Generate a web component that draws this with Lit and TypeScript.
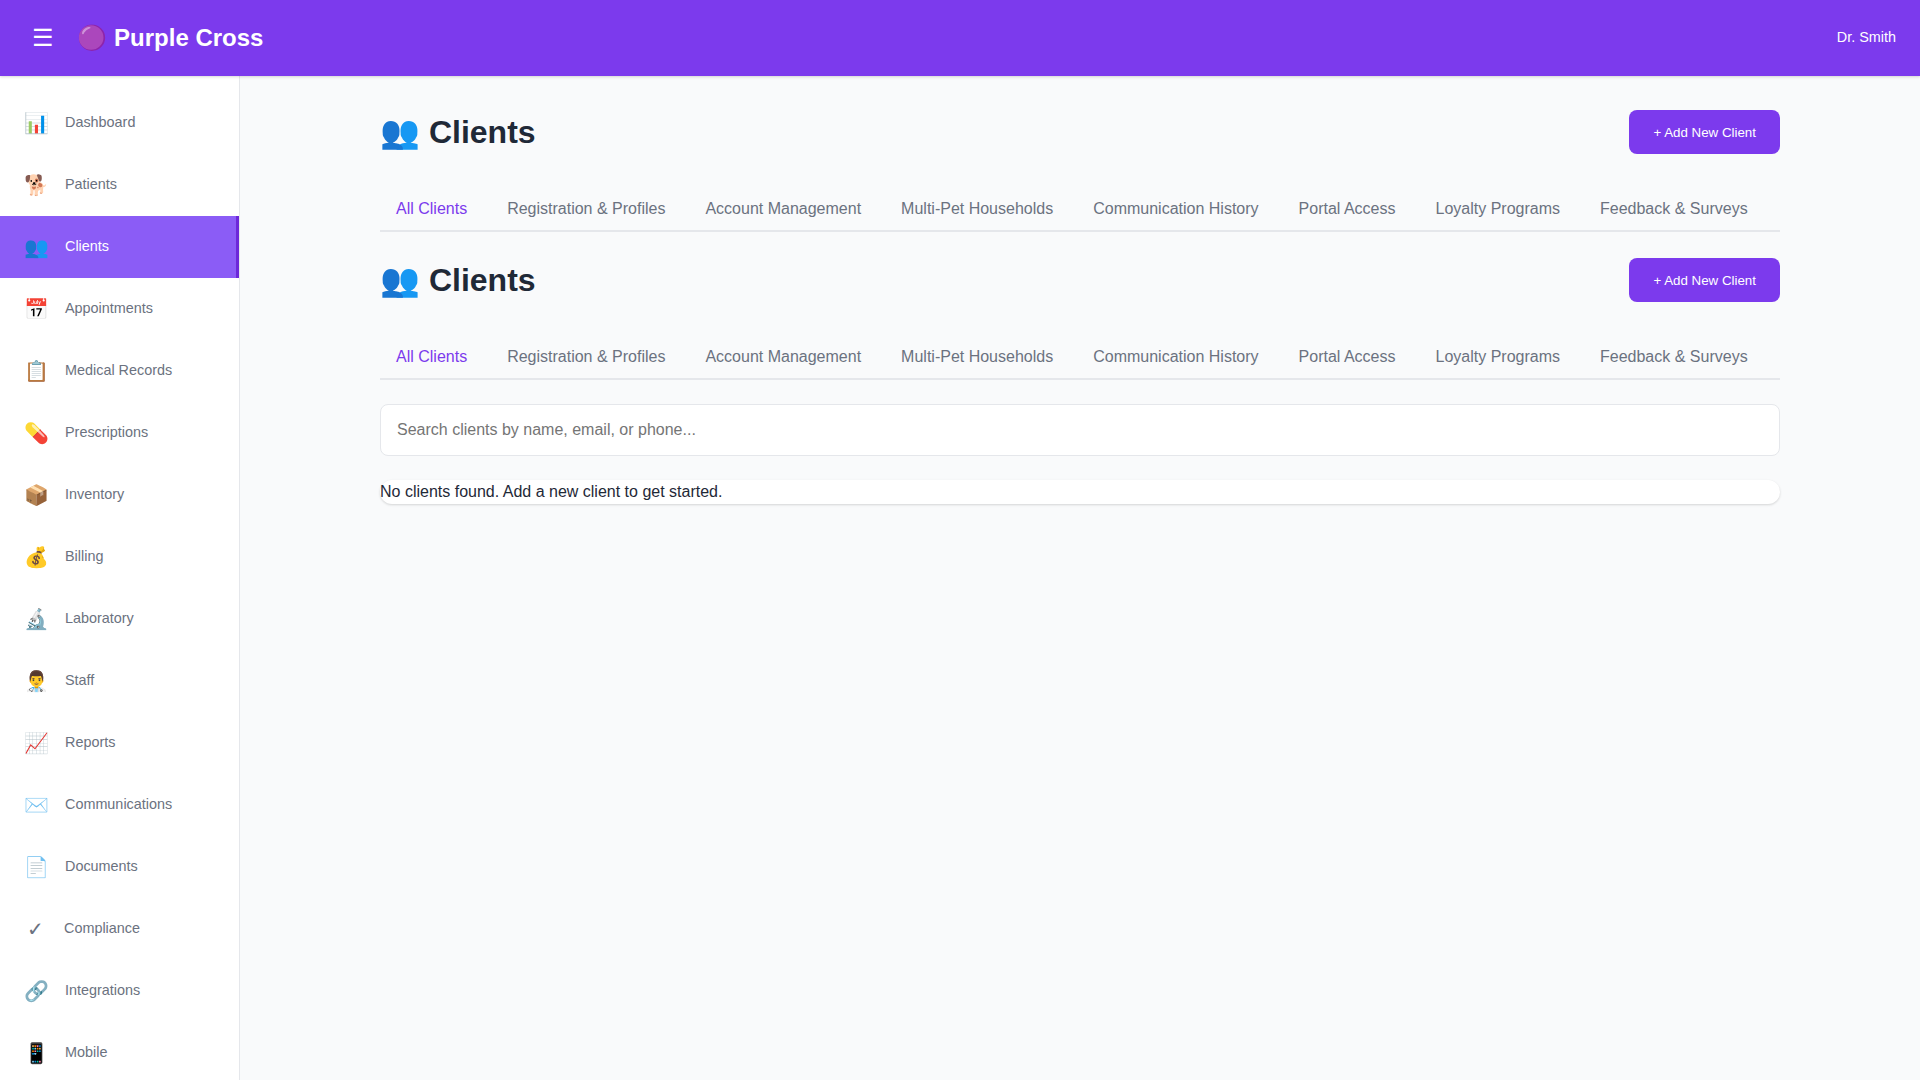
import { LitElement, html, css } from "lit";
import { customElement, property } from "lit/decorators.js";
import { classMap } from "lit/directives/class-map.js";

const NAV: [string, string][] = [
  ["📊", "Dashboard"],
  ["🐕", "Patients"],
  ["👥", "Clients"],
  ["📅", "Appointments"],
  ["📋", "Medical Records"],
  ["💊", "Prescriptions"],
  ["📦", "Inventory"],
  ["💰", "Billing"],
  ["🔬", "Laboratory"],
  ["👨‍⚕️", "Staff"],
  ["📈", "Reports"],
  ["✉️", "Communications"],
  ["📄", "Documents"],
  ["✓", "Compliance"],
  ["🔗", "Integrations"],
  ["📱", "Mobile"],
];

const TABS = [
  "All Clients",
  "Registration & Profiles",
  "Account Management",
  "Multi-Pet Households",
  "Communication History",
  "Portal Access",
  "Loyalty Programs",
  "Feedback & Surveys",
];

@customElement("clients-header")
export class ClientsHeader extends LitElement {
  @property() active = "All Clients";

  static styles = css`
    :host {
      display: block;
      margin-bottom: 24px;
    }
    .head {
      display: flex;
      justify-content: space-between;
      align-items: center;
      margin-bottom: 32px;
    }
    .title {
      margin: 0;
      font-size: 32px;
      line-height: 48px;
      font-weight: 700;
      color: #1f2937;
    }
    .add {
      min-height: 44px;
      padding: 12px 24px;
      border: none;
      border-radius: 8px;
      background: #7c3aed;
      color: #fff;
      font-family: inherit;
      font-size: 13.3333px;
    }
    .tabs {
      display: flex;
      gap: 8px;
      height: 42px;
      border-bottom: 2px solid #e5e7eb;
    }
    .tab {
      height: 42px;
      padding: 0 16px;
      border: none;
      background: none;
      color: #6b7280;
      font-family: inherit;
      font-size: 16px;
      white-space: nowrap;
    }
    .tab.active {
      color: #7c3aed;
    }
  `;

  render() {
    return html`
      <div class="head">
        <h1 class="title">👥 Clients</h1>
        <button class="add">+ Add New Client</button>
      </div>
      <div class="tabs">
        ${TABS.map(
          (t) => html`<button class=${classMap({ tab: true, active: t === this.active })}>${t}</button>`
        )}
      </div>
    `;
  }
}

@customElement("app-root")
export class AppRoot extends LitElement {
  static styles = css`
    :host {
      display: flex;
      flex-direction: column;
      height: 100vh;
      overflow: hidden;
      background: #f9fafb;
      color: #1f2937;
      font-family: "Liberation Sans", Arial, sans-serif;
      font-size: 16px;
      line-height: 1.5;
    }
    * {
      box-sizing: border-box;
    }
    .topbar {
      position: relative;
      z-index: 1;
      flex: none;
      display: flex;
      align-items: center;
      justify-content: space-between;
      height: 76px;
      padding: 0 24px;
      background: #7c3aed;
      color: #fff;
      box-shadow: 0 1px 3px rgba(0, 0, 0, 0.1), 0 1px 2px rgba(0, 0, 0, 0.06);
    }
    .brand {
      display: flex;
      align-items: center;
      gap: 15.4px;
    }
    .menu {
      padding: 8px;
      border: none;
      background: none;
      color: #fff;
      font-family: inherit;
      font-size: 24px;
    }
    .logo {
      font-size: 24px;
      font-weight: 700;
    }
    .user {
      font-size: 14.4px;
    }
    .body {
      flex: 1;
      min-height: 0;
      display: flex;
    }
    .sidebar {
      flex: none;
      width: 240px;
      padding-top: 16px;
      overflow: hidden;
      background: #fff;
      border-right: 1px solid #e5e7eb;
    }
    .item {
      display: flex;
      align-items: center;
      gap: 16px;
      height: 62px;
      padding: 0 24px;
      color: #6b7280;
    }
    .item.active {
      background: #8b5cf6;
      color: #fff;
      border-right: 3px solid #6d28d9;
    }
    .icon {
      min-width: 24px;
      font-size: 20px;
      text-align: center;
    }
    .icon.mono {
      padding-right: 1px;
    }
    .label {
      font-size: 14.4px;
    }
    .main {
      flex: 1;
      padding-top: 32px;
    }
    .container {
      width: 1400px;
      margin: 0 auto;
    }
    .search {
      display: block;
      width: 100%;
      height: 52px;
      margin-bottom: 24px;
      padding: 0 16px;
      border: 1px solid #e5e7eb;
      border-radius: 8px;
      background: #fff;
      font-family: inherit;
      font-size: 16px;
    }
    .empty {
      border-radius: 12px;
      background: #fff;
      box-shadow: 0 1px 3px rgba(0, 0, 0, 0.1), 0 1px 2px rgba(0, 0, 0, 0.06);
    }
  `;

  render() {
    return html`
      <header class="topbar">
        <div class="brand">
          <button class="menu">☰</button>
          <div class="logo">🟣 Purple Cross</div>
        </div>
        <div class="user">Dr. Smith</div>
      </header>
      <div class="body">
        <nav class="sidebar">
          ${NAV.map(
            ([icon, label]) => html`
              <div class=${classMap({ item: true, active: label === "Clients" })}>
                <span class=${classMap({ icon: true, mono: icon === "✓" })}>${icon}</span
                ><span class="label">${label}</span>
              </div>
            `
          )}
        </nav>
        <main class="main">
          <div class="container">
            <clients-header></clients-header>
            <clients-header></clients-header>
            <input class="search" type="text" placeholder="Search clients by name, email, or phone..." />
            <div class="empty">No clients found. Add a new client to get started.</div>
          </div>
        </main>
      </div>
    `;
  }
}
